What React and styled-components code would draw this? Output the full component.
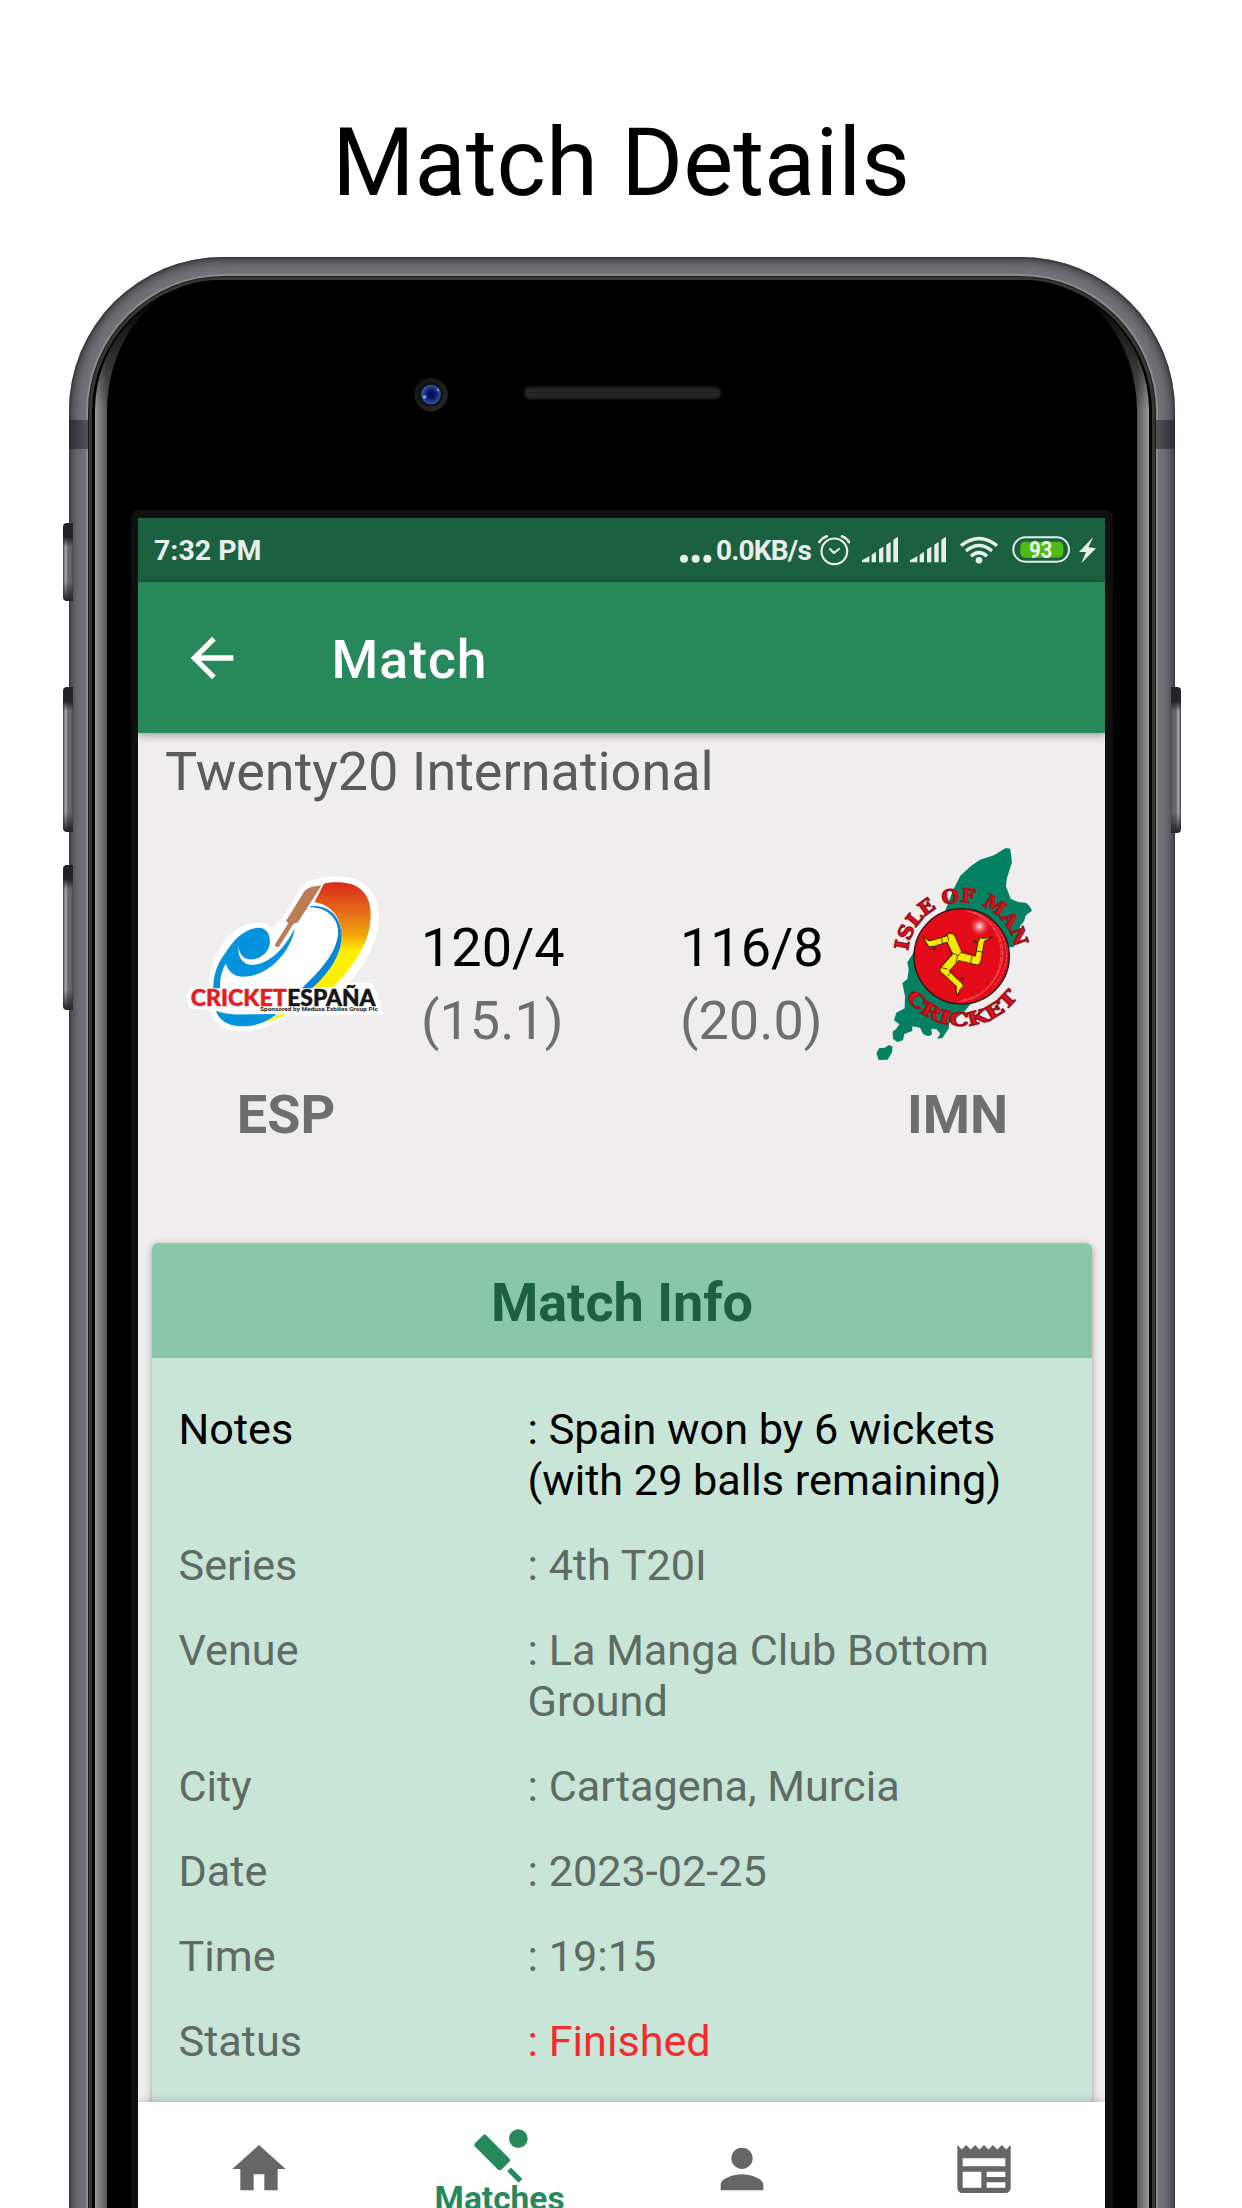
import React from 'react';
import styled, { createGlobalStyle } from 'styled-components';
import { MdArrowBack, MdHome, MdPerson, MdNewspaper, MdSportsCricket } from 'react-icons/md';

const GlobalStyle = createGlobalStyle`
  *, *::before, *::after { box-sizing: border-box; }
  body { margin: 0; background: #fff; font-family: Roboto, "Noto Sans", sans-serif; }
`;

const Page = styled.main`
  display: flex;
  flex-direction: column;
  width: 1242px;
  height: 2208px;
  overflow: hidden;
  background: #fff;
`;

const Headline = styled.h1`
  flex: none;
  height: 257px;
  margin: 0;
  padding-top: 103px;
  font-size: 94.3px;
  line-height: 120px;
  font-weight: 400;
  text-align: center;
  color: #000;
`;

/* ---------- device ---------- */

const Frame = styled.div`
  position: relative;
  flex: none;
  width: 1105.5px;
  height: 2100px;
  margin-left: 69px;
  padding: 17px 17px 0;
  border-radius: 154px 154px 0 0;
  background: #747379;
  box-shadow: inset 0 0 3px #1d1d1f, inset 0 0 14px 2px #29292c;
`;

const Ring = styled.div`
  height: 100%;
  padding: 4px 7px 0;
  border: 2px solid #8d8c93;
  border-bottom: 0;
  border-radius: 138px 138px 0 0;
  background: #000;
  box-shadow: inset 0 0 0 1px #1c1c1c, inset 0 0 0 4px #363634;
`;

const Glass = styled.div`
  height: 100%;
  padding: 0 12px;
  border-radius: 130px 130px 0 0;
  background:
    linear-gradient(to bottom, #000 15px, rgba(0, 0, 0, 0) 130px),
    linear-gradient(to right, #9a9a9a 0, #555 12px, #555 calc(100% - 12px), #9a9a9a 100%);
`;

const Face = styled.div`
  display: flex;
  flex-direction: column;
  height: 100%;
  padding: 0 24px;
  border-radius: 110px 110px 0 0 / 131px 131px 0 0;
  background: #000;
`;

const Sensors = styled.div`
  flex: none;
  display: flex;
  align-items: center;
  gap: 75px;
  height: 230px;
  padding-left: 283px;
`;

const Camera = styled.svg`
  width: 34px;
  height: 34px;
`;

const Speaker = styled.div`
  width: 199px;
  height: 14px;
  margin-top: -5px;
  border: 2px solid #121212;
  border-radius: 7px;
  background:
    repeating-linear-gradient(to right, rgba(0, 0, 0, 0.15) 0 1px, transparent 1px 4px),
    repeating-linear-gradient(to bottom, rgba(0, 0, 0, 0.15) 0 1px, transparent 1px 4px),
    #272727;
`;

const Bezel = styled.div`
  flex: 1;
  padding: 8px 8px 0 7px;
  border-radius: 7px 7px 0 0;
  background: #101010;
`;

const Band = styled.i`
  position: absolute;
  top: 163px;
  ${(p) => p.$side}: 0;
  width: 19px;
  height: 29px;
  background: linear-gradient(to ${(p) => (p.$side === 'left' ? 'right' : 'left')}, #2d2d31, #3b3c41 40%, #54555b);
`;

const SideKey = styled.i`
  position: absolute;
  top: ${(p) => p.$top}px;
  ${(p) => p.$side}: -6px;
  width: 10px;
  height: ${(p) => p.$height}px;
  border-radius: ${(p) => (p.$side === 'left' ? '4px 0 0 4px' : '0 4px 4px 0')};
  background:
    linear-gradient(to bottom, #222327 0 14px, rgba(34, 35, 39, 0) 24px calc(100% - 20px), #222327),
    linear-gradient(to ${(p) => (p.$side === 'left' ? 'right' : 'left')}, #55565a 0 1px, #a3a4a8 2px 3px, #66666d 5px 8px, #4a4a4f);
`;

/* ---------- app ---------- */

const Screen = styled.div`
  display: flex;
  flex-direction: column;
  width: 967px;
  height: 1690px;
  overflow: hidden;
  background: #efedee;
`;

const StatusBar = styled.div`
  flex: none;
  display: flex;
  align-items: center;
  justify-content: space-between;
  height: 64px;
  padding: 0 9px 0 16px;
  background: #1b6041;
  color: #e8efeb;
  font-size: 28.5px;
  line-height: 34px;
  font-weight: 700;
`;

const Clock = styled.span`
  margin-top: 2px;
`;

const StatusGroup = styled.div`
  display: flex;
  align-items: center;
`;

const Speed = styled.span`
  margin: 2px 7px 0 4px;
  font-size: 28px;
  letter-spacing: -0.8px;
`;

const StatusGlyph = styled.svg`
  width: ${(p) => p.$w}px;
  height: 36px;
  margin-right: ${(p) => p.$gap || 0}px;
`;

const Toolbar = styled.header`
  position: relative;
  flex: none;
  display: flex;
  align-items: center;
  gap: 88px;
  height: 151px;
  padding-left: 41.5px;
  background: #27895b;
  color: #fff;
  box-shadow: 0 2px 9px rgba(0, 0, 0, 0.38);
  svg { width: 64px; height: 64px; }
`;

const ToolbarTitle = styled.h2`
  margin: 4px 0 0;
  font-size: 53.5px;
  line-height: 64px;
  font-weight: 500;
  letter-spacing: 1px;
`;

const Content = styled.section`
  flex: none;
  height: 1369px;
  padding-top: 7px;
  overflow: hidden;
`;

const MatchType = styled.div`
  padding-left: 27px;
  font-size: 54px;
  line-height: 64px;
  letter-spacing: -0.03px;
  color: #5b5b5b;
`;

const Scoreboard = styled.div`
  display: grid;
  grid-template-columns: 270px 259px 149px 257px;
  margin-top: 39px;
  padding-left: 13px;
`;

const Team = styled.div`
  display: flex;
  flex-direction: column;
  align-items: center;
`;

const LogoBox = styled.div`
  display: flex;
  align-items: center;
  height: 220px;
  svg { display: block; overflow: visible; }
`;

const TeamName = styled.div`
  margin-top: 20px;
  font-size: 54px;
  line-height: 64px;
  font-weight: 700;
  color: #6e6e6e;
`;

const Score = styled.div`
  padding-top: 69px;
  font-size: 54px;
  line-height: 72px;
  color: #000;
`;

const Overs = styled.div`
  padding-top: 1px;
  color: #6e6e6e;
`;

const Card = styled.article`
  width: 940px;
  height: 1000px;
  margin: 96px 0 0 14px;
  border-radius: 6px;
  overflow: hidden;
  background: #c9e5d7;
  box-shadow: 0 2px 7px rgba(0, 0, 0, 0.35);
`;

const CardTitle = styled.h3`
  height: 115px;
  margin: 0;
  padding-top: 2px;
  background: #89c7ab;
  color: #1b6041;
  font-size: 54px;
  line-height: 115px;
  font-weight: 700;
  text-align: center;
`;

const Facts = styled.dl`
  display: grid;
  grid-template-columns: 349px 500px;
  row-gap: 34px;
  margin: 0;
  padding: 46px 0 0 26.5px;
  font-size: 43.2px;
  line-height: 51px;
`;

const Label = styled.dt`
  color: ${(p) => p.$color || '#5d6b64'};
`;

const Value = styled.dd`
  margin: 0;
  white-space: pre-line;
  color: ${(p) => p.$color || '#5d6b64'};
`;

const NavBar = styled.nav`
  position: relative;
  flex: none;
  display: grid;
  grid-template-columns: repeat(4, 1fr);
  height: 130px;
  background: #fff;
  box-shadow: 0 -1px 8px rgba(0, 0, 0, 0.2);
`;

const NavItem = styled.a`
  display: flex;
  flex-direction: column;
  align-items: center;
  padding-top: ${(p) => (p.$active ? 22 : 35)}px;
  color: ${(p) => (p.$active ? '#27895b' : '#666')};
  font-size: 33.5px;
  line-height: 38px;
  font-weight: 700;
  svg { width: 64px; height: 64px; }
  span { margin: -8px 2px 0 0; }
`;

/* ---------- drawings ---------- */

const CameraLens = () => (
  <Camera viewBox="0 0 34 34">
    <defs>
      <radialGradient id="lens" cx=".52" cy=".5" r=".55">
        <stop offset="0" stopColor="#00094a" />
        <stop offset=".4" stopColor="#0a1a66" />
        <stop offset="1" stopColor="#3a64b8" />
      </radialGradient>
      <linearGradient id="rim" x2="1" y2="1">
        <stop offset="0" stopColor="#111" />
        <stop offset="1" stopColor="#2a2a2a" />
      </linearGradient>
    </defs>
    <circle cx="17" cy="16.5" r="16.7" fill="url(#rim)" />
    <circle cx="17" cy="16.5" r="12" fill="#101010" />
    <circle cx="17" cy="16.5" r="9.8" fill="url(#lens)" />
    <circle cx="10.6" cy="18.9" r="1.8" fill="#9cc0ee" opacity=".7" />
    <circle cx="24" cy="11.9" r="1.4" fill="#6fb6ea" opacity=".7" />
  </Camera>
);

const Dots = () => (
  <StatusGlyph $w={32} viewBox="0 0 96 108">
    <g fill="#e8efeb">
      <circle cx="12" cy="80" r="12" />
      <circle cx="47" cy="80" r="12" />
      <circle cx="82" cy="80" r="12" />
    </g>
  </StatusGlyph>
);

const Alarm = () => (
  <StatusGlyph $w={32} $gap={12} viewBox="473 66 96 108">
    <g fill="none" stroke="#e8efeb" strokeWidth="6.5" strokeLinecap="round" strokeLinejoin="round">
      <circle cx="522" cy="124" r="38.5" />
      <path d="M477 96Q485 84 499 79M545 79Q559 84 566 96" strokeWidth="8" />
      <path d="M509 117L521 129L536 117" />
    </g>
  </StatusGlyph>
);

const Signal = ({ gap }) => (
  <StatusGlyph $w={36} $gap={gap} viewBox="605 66 108 108">
    <path
      fill="#e8efeb"
      d="M605 157V151L627 139V157ZM634 157V134L647 125V157ZM656 157V118L669 110V157ZM678 157V104L691 95V157ZM699 157V89L713 80V157Z"
    />
  </StatusGlyph>
);

const Wifi = () => (
  <StatusGlyph $w={38} $gap={14} viewBox="900 66 114 108">
    <g fill="none" stroke="#e8efeb" strokeWidth="10.5">
      <path d="M903 107Q957 64 1011 107" />
      <path d="M918 123Q957 90 996 123" />
      <path d="M933 139Q957 117 981 139" />
    </g>
    <circle cx="957" cy="151" r="10" fill="#e8efeb" />
  </StatusGlyph>
);

const Battery = () => (
  <StatusGlyph $w={58} $gap={9} viewBox="1055 66 174 108">
    <rect x="1059" y="82" width="167" height="73" rx="36.5" fill="none" stroke="#e8efeb" strokeWidth="6" />
    <rect x="1080" y="95" width="129" height="48" rx="14" fill="#50ba17" />
    <text
      x="1107"
      y="143"
      textLength="69"
      lengthAdjust="spacingAndGlyphs"
      fontFamily="Roboto"
      fontWeight="700"
      fontSize="69"
      fill="#f2fbee"
    >
      93
    </text>
  </StatusGlyph>
);

const Bolt = () => (
  <StatusGlyph $w={17} viewBox="1255 66 51 108">
    <path fill="#e8efeb" d="M1298 80L1255 126H1276L1262 160L1306 115L1283 112Z" />
  </StatusGlyph>
);

const SpainLogo = () => (
  <svg width="200" height="163" viewBox="50 70 600 490">
    <defs>
      <linearGradient id="sunset" x1="0" x2="0" y1="0" y2="1">
        <stop offset="0" stopColor="#d9291c" />
        <stop offset=".3" stopColor="#e5701a" />
        <stop offset=".5" stopColor="#f2a50c" />
        <stop offset=".66" stopColor="#fff000" />
        <stop offset="1" stopColor="#fff000" />
      </linearGradient>
    </defs>
    <path
      d="M120 420C118 350 150 285 200 245C235 222 285 215 310 242L345 205L392 125C402 102 430 90 470 89C520 78 580 88 606 130C632 170 632 220 615 275C598 325 565 370 535 405L610 405L622 435L640 497L352 500C310 530 260 550 205 548C165 544 138 525 125 490L122 482L62 478L54 445L64 420Z"
      fill="#fff"
      stroke="#fff"
      strokeWidth="4"
      strokeLinejoin="round"
    />
    <path d="M464 105C500 98 550 98 578 125C606 152 608 195 602 232C590 305 540 365 492 416H434C478 370 505 335 514 285C524 225 500 172 436 160Z" fill="url(#sunset)" />
    <path d="M422 176C470 176 508 205 507 256C500 318 450 370 397 420H428C480 372 522 315 516 250C511 200 475 168 422 173Z" fill="#0784dc" />
    <path d="M405 128C415 115 435 111 456 111L386 221L372 226L330 293C325 298 315 294 317 287L357 224L350 217Z" fill="#bb7c56" />
    <path d="M262 238C295 236 304 262 301 287C295 325 245 345 221 325C210 315 207 302 208 290C202 325 222 352 252 349C305 345 348 295 376 240C368 300 305 385 218 385C190 383 175 365 169 345C155 370 150 395 152 420H131C133 370 145 345 170 310C195 270 225 243 262 238Z" fill="#0593de" />
    <path d="M139 487C155 493 175 498 200 498L322 497C290 525 250 535 215 534C178 533 150 518 139 487Z" fill="#0593de" />
    <path d="M322 500L350 497C330 511 305 520 282 520C300 516 314 508 322 500Z" fill="#fff000" />
    <path d="M66 420H620V478H628V496H270V480H66Z" fill="#fff" />
    <text x="64" y="473" textLength="288" lengthAdjust="spacingAndGlyphs" fontFamily="Lato" fontWeight="900" fontSize="67" fill="#e31e24" stroke="#e31e24" strokeWidth="1.5">
      CRICKET
    </text>
    <text x="354" y="473" textLength="265" lengthAdjust="spacingAndGlyphs" fontFamily="Lato" fontWeight="900" fontSize="67" fill="#151515" stroke="#151515" strokeWidth="1.5">
      ESPAÑA
    </text>
    <text x="272" y="489" textLength="354" lengthAdjust="spacingAndGlyphs" fontFamily="Roboto" fontWeight="700" fontSize="18" fill="#222">
      Sponsored by Medusa Exbitex Group Plc
    </text>
  </svg>
);

const ManLogo = () => (
  <svg width="163.3" height="220" viewBox="48 40 490 660">
    <defs>
      <path id="arcTop" d="M144 363A162 162 0 0 1 466 360" />
      <path id="arcBottom" d="M138 503A207 207 0 0 0 480 493" />
      <radialGradient id="shine">
        <stop offset="0" stopColor="#fff" stopOpacity=".95" />
        <stop offset="1" stopColor="#e30b17" stopOpacity="0" />
      </radialGradient>
    </defs>
    <g fill="#048163">
      <path d="M437 55L451 57L456 98L441 145L438 170L452 207L475 217L499 220L509 230L516 243L498 257L492 275L480 290L475 320L462 352L430 355L400 480L330 525L312 548L268 580L266 597L247 625L231 627L241 612L229 598L214 597L216 615L205 620L190 614L180 594L157 590L157 604L133 613L129 632L112 637L99 627L98 606L109 597L118 584L102 572L109 549L134 536L135 500L127 460L142 448L146 420L142 398L160 370L210 270L255 245L280 180L301 138L332 110L360 90L402 77Z" />
      <path d="M87 646L98 651L96 668L83 690L56 691L49 670L58 655L73 655Z" />
    </g>
    <circle cx="305" cy="380" r="143" fill="#e30b17" stroke="#24130f" strokeWidth="4" />
    <g fill="none" stroke="#f7a0a4" strokeWidth="2.2" opacity=".7">
      <path d="M330 246C420 270 460 370 400 455C370 500 330 512 296 516" />
      <path d="M345 248C445 285 470 395 400 470" strokeDasharray="9 4" />
      <path d="M318 243C400 262 440 340 417 415C395 480 345 505 305 512" strokeDasharray="14 5" />
    </g>
    <circle cx="359" cy="290" r="33" fill="url(#shine)" />
    <g strokeLinejoin="round" strokeLinecap="round" fill="none">
      <g stroke="#26200a">
        <path d="M293 378L272 325" strokeWidth="31" />
        <path d="M272 325L218 341" strokeWidth="21" />
        <path d="M293 378L350 393" strokeWidth="27" />
        <path d="M354 390L363 338" strokeWidth="21" />
        <path d="M290 378L254 420" strokeWidth="29" />
        <path d="M254 424L298 466" strokeWidth="21" />
      </g>
      <g fill="#ffe600" stroke="#26200a" strokeWidth="3">
        <path d="M218 334L204 332L190 319L198 338L208 353L220 347Z" />
        <path d="M357 338L359 324L371 326L398 322L375 333L368 342Z" />
        <path d="M290 464L288 482L293 498L300 480L311 468L302 458Z" />
      </g>
      <g stroke="#ffe600">
        <path d="M293 374L272 325" strokeWidth="26" />
        <path d="M272 325L218 341" strokeWidth="16" />
        <path d="M298 380L350 393" strokeWidth="22" />
        <path d="M354 390L363 338" strokeWidth="16" />
        <path d="M288 382L254 420" strokeWidth="24" />
        <path d="M254 424L298 466" strokeWidth="16" />
      </g>
      <g stroke="#26200a" strokeWidth="2.5">
        <path d="M293 378L275 368M293 378L308 366M293 378L288 398M262 316L266 332M244 324L249 344M336 380L332 398M351 364L369 368M244 414L262 418M264 438L277 424M341 335L352 340M302 448L311 446M218 355L226 358" />
        <circle cx="345" cy="336" r="3" />
        <circle cx="307" cy="447" r="3" />
        <circle cx="224" cy="358" r="3" />
      </g>
    </g>
    <g fontFamily="'DejaVu Serif'" fontWeight="700" fill="#e0101c" stroke="#9c141b" strokeWidth="4" strokeLinejoin="round">
      <text fontSize="57">
        <textPath href="#arcTop" textLength="466" lengthAdjust="spacingAndGlyphs">ISLE OF MAN</textPath>
      </text>
      <text fontSize="55">
        <textPath href="#arcBottom" textLength="392" lengthAdjust="spacingAndGlyphs">CRICKET</textPath>
      </text>
    </g>
  </svg>
);

/* ---------- data ---------- */

const facts = [
  { label: 'Notes', value: ': Spain won by 6 wickets\n(with 29 balls remaining)', labelColor: '#000', valueColor: '#000' },
  { label: 'Series', value: ': 4th T20I' },
  { label: 'Venue', value: ': La Manga Club Bottom\nGround' },
  { label: 'City', value: ': Cartagena, Murcia' },
  { label: 'Date', value: ': 2023-02-25' },
  { label: 'Time', value: ': 19:15' },
  { label: 'Status', value: ': Finished', valueColor: '#f02c2e' },
];

export default function App() {
  return (
    <Page>
      <GlobalStyle />
      <Headline>Match Details</Headline>
      <Frame>
        <Ring>
          <Glass>
            <Face>
              <Sensors>
                <CameraLens />
                <Speaker />
              </Sensors>
              <Bezel>
                <Screen>
                  <StatusBar>
                    <Clock>7:32 PM</Clock>
                    <StatusGroup>
                      <Dots />
                      <Speed>0.0KB/s</Speed>
                      <Alarm />
                      <Signal gap={12} />
                      <Signal gap={14} />
                      <Wifi />
                      <Battery />
                      <Bolt />
                    </StatusGroup>
                  </StatusBar>
                  <Toolbar>
                    <MdArrowBack />
                    <ToolbarTitle>Match</ToolbarTitle>
                  </Toolbar>
                  <Content>
                    <MatchType>Twenty20 International</MatchType>
                    <Scoreboard>
                      <Team>
                        <LogoBox><SpainLogo /></LogoBox>
                        <TeamName>ESP</TeamName>
                      </Team>
                      <Score>
                        120/4
                        <Overs>(15.1)</Overs>
                      </Score>
                      <Score>
                        116/8
                        <Overs>(20.0)</Overs>
                      </Score>
                      <Team>
                        <LogoBox><ManLogo /></LogoBox>
                        <TeamName>IMN</TeamName>
                      </Team>
                    </Scoreboard>
                    <Card>
                      <CardTitle>Match Info</CardTitle>
                      <Facts>
                        {facts.map((f) => (
                          <React.Fragment key={f.label}>
                            <Label $color={f.labelColor}>{f.label}</Label>
                            <Value $color={f.valueColor}>{f.value}</Value>
                          </React.Fragment>
                        ))}
                      </Facts>
                    </Card>
                  </Content>
                  <NavBar>
                    <NavItem><MdHome /></NavItem>
                    <NavItem $active>
                      <MdSportsCricket />
                      <span>Matches</span>
                    </NavItem>
                    <NavItem><MdPerson /></NavItem>
                    <NavItem><MdNewspaper /></NavItem>
                  </NavBar>
                </Screen>
              </Bezel>
            </Face>
          </Glass>
        </Ring>
        <Band $side="left" />
        <Band $side="right" />
        <SideKey $side="left" $top={266} $height={78} />
        <SideKey $side="left" $top={430} $height={145} />
        <SideKey $side="left" $top={608} $height={145} />
        <SideKey $side="right" $top={430} $height={146} />
      </Frame>
    </Page>
  );
}
